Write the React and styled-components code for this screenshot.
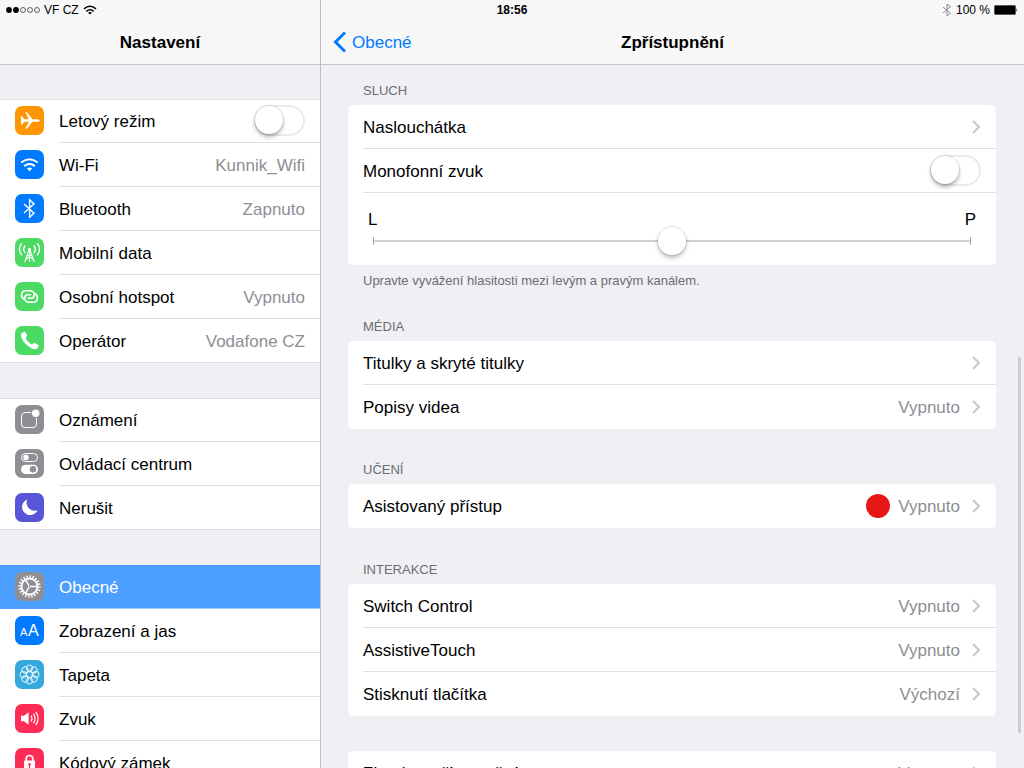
import React from 'react';
import styled, { createGlobalStyle } from 'styled-components';

const GlobalStyle = createGlobalStyle`
    * {
        box-sizing: border-box;
    }

    body {
        margin: 0;
        background: #efeff4;
        color: #000;
        font-family: "Liberation Sans", Arial, sans-serif;
        font-size: 17px;
    }

    button, input {
        font: inherit;
        margin: 0;
    }
`;

const Screen = styled.div`
    position: relative;
    display: grid;
    grid-template-columns: 320px 1fr;
    height: 100vh;
    overflow: hidden;
`;

const StatusBar = styled.div`
    position: absolute;
    top: 0;
    left: 0;
    right: 0;
    z-index: 2;
    display: grid;
    grid-template-columns: 1fr auto 1fr;
    align-items: center;
    height: 20px;
    padding: 0 6px;
    font-size: 12px;
`;

const StatusGroup = styled.div`
    display: flex;
    align-items: center;
    justify-content: ${({ $end }) => ($end ? 'flex-end' : 'flex-start')};
    gap: 4px;
`;

const Panel = styled.section`
    display: flex;
    flex-direction: column;
    min-width: 0;
    min-height: 0;
`;

const DetailPanel = styled(Panel)`
    position: relative;
    border-left: 1px solid #bdbdc2;
`;

const NavBar = styled.header`
    display: grid;
    grid-template-columns: 1fr auto 1fr;
    align-items: center;
    flex: none;
    height: 65px;
    padding: 20px 12px 0;
    background: #f7f7f8;
    border-bottom: 1px solid #c5c5ca;
`;

const Title = styled.h1`
    grid-column: 2;
    margin: 0;
    padding-top: 2px;
    font-size: 17px;
    line-height: 20px;
    font-weight: bold;
`;

const BackButton = styled.button`
    display: flex;
    align-items: center;
    justify-self: start;
    gap: 6px;
    padding: 0;
    border: 0;
    background: none;
    color: #007aff;
`;

const Sidebar = styled.nav`
    display: flex;
    flex-direction: column;
    gap: 35px;
    padding-top: 34px;
    overflow: hidden;
`;

const MenuGroup = styled.div`
    flex: none;
    background: #fff;
    box-shadow: inset 0 1px #dfdfe3;
`;

const MenuItem = styled.a`
    display: flex;
    align-items: center;
    height: 44px;
    padding-left: 15px;
    gap: 15px;
    color: ${({ $selected }) => ($selected ? '#fff' : '#000')};
    background: ${({ $selected }) => ($selected ? '#4c9fff' : 'transparent')};
    text-decoration: none;

    &:last-child {
        border-bottom: 1px solid #dfdfe3;
    }
`;

const MenuBody = styled.span`
    display: flex;
    align-items: center;
    flex: 1;
    height: 44px;
    padding-right: 15px;
    border-bottom: 1px solid ${({ $selected }) => ($selected ? '#a3ceff' : '#dfdfe3')};

    ${MenuItem}:last-child & {
        height: 43px;
        border-bottom: 0;
    }
`;

const Icon = styled.svg`
    flex: none;
    width: 29px;
    height: 29px;
    border-radius: 7px;
    background: ${({ $color }) => $color};
    fill: none;
    stroke: #fff;
    margin-bottom: 1px;
`;

const Label = styled.span`
    flex: 1;
    padding-top: 2px;
`;

const Value = styled.span`
    padding-top: 2px;
    color: #8e8e93;
`;

const Switch = styled.input`
    appearance: none;
    flex: none;
    width: 51px;
    height: 31px;
    border: 2px solid #ebebeb;
    border-radius: 16px;
    background: #fff;

    &::before {
        content: '';
        display: block;
        width: 28px;
        height: 28px;
        margin: -1px;
        border-radius: 50%;
        background: #fff;
        box-shadow: 0 0 1px 1px rgba(0, 0, 0, 0.1), 0 3px 4px rgba(0, 0, 0, 0.28);
    }

    &:checked {
        background: #4cd964;
        border-color: #4cd964;
    }

    &:checked::before {
        margin-left: 20px;
    }
`;

const Content = styled.main`
    flex: 1;
    min-height: 0;
    padding: 0 28px 0 27px;
    overflow: hidden;
`;

const Section = styled.section`
    padding-top: ${({ $gap }) => $gap}px;
`;

const SectionTitle = styled.h2`
    margin: 0;
    padding: 1px 15px 6px;
    color: #6d6d72;
    font-size: 13px;
    line-height: 16px;
    font-weight: normal;
    text-transform: uppercase;
`;

const SectionNote = styled.p`
    margin: 0;
    padding: 8px 15px 0;
    color: #6d6d72;
    font-size: 13px;
    line-height: 16px;
`;

const Card = styled.div`
    border-radius: 5px;
    background: #fff;
`;

const Row = styled.a`
    display: flex;
    height: 44px;
    padding-left: 15px;
    color: #000;
    text-decoration: none;
`;

const RowBody = styled.span`
    display: flex;
    align-items: center;
    flex: 1;
    padding-right: 15px;
    border-bottom: 1px solid #dfdfe3;

    ${Row}:last-child & {
        border-bottom: 0;
    }
`;

const Chevron = styled.svg`
    flex: none;
    width: 9px;
    height: 14px;
    margin-left: 12px;
    fill: none;
    stroke: #c7c7cc;
    stroke-width: 2;
`;

const RedDot = styled.span`
    width: 24px;
    height: 24px;
    margin-right: 8px;
    border-radius: 50%;
    background: #e81717;
`;

const BalanceRow = styled.div`
    padding: 18px 20px 12px;
`;

const BalanceLabels = styled.label`
    display: flex;
    justify-content: space-between;
    line-height: 18px;
`;

const Balance = styled.input`
    appearance: none;
    display: block;
    width: calc(100% - 10px);
    height: 24px;
    margin: 0 5px;
    background:
        linear-gradient(#a9a9a9, #a9a9a9) left center / 1px 8px no-repeat,
        linear-gradient(#a9a9a9, #a9a9a9) right center / 1px 8px no-repeat,
        linear-gradient(#d0d0d0, #d0d0d0) center / 100% 2px no-repeat;

    &::-webkit-slider-thumb {
        appearance: none;
        width: 28px;
        height: 28px;
        border-radius: 50%;
        background: #fff;
        box-shadow: 0 0 1px 1px rgba(0, 0, 0, 0.1), 0 3px 4px rgba(0, 0, 0, 0.25);
    }
`;

const ScrollThumb = styled.div`
    position: absolute;
    right: 3px;
    top: 357px;
    width: 3px;
    height: 376px;
    border-radius: 2px;
    background: #cbcbd0;
`;

const range = (n) => Array.from({ length: n }, (_, i) => i);

const icons = {
    plane: {
        color: '#ff9500',
        art: (
            <path
                fill="#fff"
                stroke="none"
                d="M6 10.2h1.1l2.3 3h4.4L10.4 6.3h1.5l5.5 6.9h5.1c1.5 0 2.3.8 2.3 1.3s-.8 1.3-2.3 1.3h-5.1l-5.5 6.9h-1.5l3.4-6.9H9.4l-2.3 3H6z"
            />
        ),
    },
    wifi: {
        color: '#007aff',
        art: (
            <g strokeWidth="2">
                <path d="M6.2 12.6Q14.5 5.8 22.8 12.6" />
                <path d="M9.2 16.1Q14.5 11.8 19.8 16.1" />
                <path d="M14.5 21.2l-2.6-2.7q2.6-2 5.2 0z" fill="#fff" stroke="none" />
            </g>
        ),
    },
    bluetooth: {
        color: '#007aff',
        art: <path strokeWidth="1.4" d="M9 10l10 9.2-4.4 4V5.8L19 9.8 9 19" />,
    },
    antenna: {
        color: '#4cd964',
        art: (
            <g strokeWidth="1.1">
                <path d="M14.5 11v13M14.3 11L9.8 24M14.7 11L19.2 24M12.6 17l5.2 4M16.4 17l-5.2 4" />
                <circle cx="14.5" cy="11.3" r="1.3" fill="#fff" stroke="none" />
                <path strokeWidth="1.4" d="M10.3 7.5q-3.4 3.8 0 7.6M18.7 7.5q3.4 3.8 0 7.6M6.8 5.3q-4.8 6 0 12M22.2 5.3q4.8 6 0 12" />
            </g>
        ),
    },
    hotspot: {
        color: '#4cd964',
        art: (
            <g strokeWidth="1.6" strokeLinecap="round">
                <path d="M9.4 17.5C7.6 16.7 6.6 15 6.6 13.1c0-2.6 1.7-4.3 4.2-4.3h3.4c3.1 0 5.1 1.6 5.1 4s-1.6 3.5-3.8 3.5h-2.2" />
                <path d="M19.6 11.5c1.8.8 2.8 2.5 2.8 4.4 0 2.6-1.7 4.3-4.2 4.3h-3.4c-3.1 0-5.1-1.6-5.1-4s1.6-3.5 3.8-3.5h2.2" />
            </g>
        ),
    },
    phone: {
        color: '#4cd964',
        art: (
            <path
                fill="#fff"
                stroke="none"
                d="M9.6 5.8C10.6 5.6 11.3 7.6 11.9 9.3C12.2 10.4 11.6 10.9 10.8 11.6C10.2 12.2 11.2 13.8 13.2 15.8C15.2 17.8 16.7 18.8 17.4 18.2C18.1 17.4 18.6 16.9 19.7 17.2C21.5 17.8 23.9 18.8 23.8 19.8C23.4 21.7 21.8 23.3 19.8 23.2C17 23 13 20.3 10.8 18C8.3 15.4 6 12 5.9 9.2C5.8 7.4 7.6 6.1 9.6 5.8Z"
            />
        ),
    },
    notifications: {
        color: '#8e8e93',
        art: (
            <g>
                <rect x="6.5" y="7.5" width="15" height="15" rx="3.5" />
                <circle cx="20.7" cy="8.3" r="4.3" fill="#fff" stroke="#8e8e93" />
            </g>
        ),
    },
    controls: {
        color: '#8e8e93',
        art: (
            <g>
                <rect x="6.5" y="4.5" width="16" height="8" rx="4" />
                <circle cx="11" cy="8.5" r="2.7" fill="#fff" stroke="none" />
                <rect x="6" y="15.7" width="17" height="9.3" rx="4.6" fill="#fff" stroke="none" />
                <circle cx="18" cy="20.3" r="3.2" fill="#8e8e93" stroke="none" />
            </g>
        ),
    },
    moon: {
        color: '#5856d6',
        art: <path fill="#fff" stroke="none" d="M12.2 6.4A8.1 8.1 0 1 0 22.6 17.2A8.2 8.2 0 0 1 12.2 6.4Z" />,
    },
    gear: {
        color: '#8e8e93',
        art: (
            <g>
                <circle cx="14.5" cy="14.5" r="10" strokeWidth="2.4" pathLength="40" strokeDasharray="0.9 1.1" />
                <circle cx="14.5" cy="14.5" r="8" strokeWidth="2" />
                <path strokeWidth="1.4" d="M15 14.5h7M14.2 14.1l-3.6-6.2M14.2 14.9l-3.6 6.2" />
            </g>
        ),
    },
    display: {
        color: '#007aff',
        art: (
            <g fill="#fff" stroke="none">
                <text x="5" y="20" fontSize="11">A</text>
                <text x="13" y="20" fontSize="16">A</text>
            </g>
        ),
    },
    wallpaper: {
        color: '#34aadc',
        art: (
            <g strokeWidth=".9">
                {range(8).map((i) => (
                    <circle key={i} cx="14.5" cy="8.2" r="3.2" transform={`rotate(${i * 45} 14.5 14.5)`} />
                ))}
                <circle cx="14.5" cy="14.5" r="2.9" />
            </g>
        ),
    },
    sound: {
        color: '#ff2d55',
        art: (
            <g strokeWidth="1.2" strokeLinecap="round">
                <path d="M6 11.8h3l4.6-3.6v12.6L9 17.2H6z" fill="#fff" stroke="none" />
                <path d="M16.3 12q1.6 2.5 0 5M18.7 10.2q2.8 4.3 0 8.6M21.1 8.4q4 6.1 0 12.2" />
            </g>
        ),
    },
    lock: {
        color: '#ff2d55',
        art: (
            <g>
                <path d="M11.2 14v-3.2a3.3 3.3 0 0 1 6.6 0V14" strokeWidth="1.7" />
                <rect x="9" y="12.5" width="11" height="10" rx="1" fill="#fff" stroke="none" />
                <path d="M14.5 16v4" stroke="#ff2d55" strokeWidth="1.2" />
                <circle cx="14.5" cy="16.3" r="1.3" fill="#ff2d55" stroke="none" />
            </g>
        ),
    },
};

const menu = [
    [
        { icon: 'plane', label: 'Letový režim', toggle: true },
        { icon: 'wifi', label: 'Wi-Fi', value: 'Kunnik_Wifi' },
        { icon: 'bluetooth', label: 'Bluetooth', value: 'Zapnuto' },
        { icon: 'antenna', label: 'Mobilní data' },
        { icon: 'hotspot', label: 'Osobní hotspot', value: 'Vypnuto' },
        { icon: 'phone', label: 'Operátor', value: 'Vodafone CZ' },
    ],
    [
        { icon: 'notifications', label: 'Oznámení' },
        { icon: 'controls', label: 'Ovládací centrum' },
        { icon: 'moon', label: 'Nerušit' },
    ],
    [
        { icon: 'gear', label: 'Obecné', selected: true },
        { icon: 'display', label: 'Zobrazení a jas' },
        { icon: 'wallpaper', label: 'Tapeta' },
        { icon: 'sound', label: 'Zvuk' },
        { icon: 'lock', label: 'Kódový zámek' },
    ],
];

const SidebarItem = ({ icon, label, value, toggle, selected }) => {
    const link = toggle ? { as: 'label' } : { href: '#' };
    return (
        <MenuItem {...link} $selected={selected} aria-current={selected ? 'page' : undefined}>
            <Icon viewBox="0 0 29 29" $color={icons[icon].color} aria-hidden="true">
                {icons[icon].art}
            </Icon>
            <MenuBody $selected={selected}>
                <Label>{label}</Label>
                {value && <Value>{value}</Value>}
                {toggle && <Switch type="checkbox" role="switch" />}
            </MenuBody>
        </MenuItem>
    );
};

const SettingRow = ({ label, value, toggle, dot }) => {
    const link = toggle ? { as: 'label' } : { href: '#' };
    return (
        <Row {...link}>
            <RowBody>
                <Label>{label}</Label>
                {dot && <RedDot />}
                {value && <Value>{value}</Value>}
                {toggle ? (
                    <Switch type="checkbox" role="switch" />
                ) : (
                    <Chevron viewBox="0 0 9 14" aria-hidden="true">
                        <path d="M1 1l6 6-6 6" />
                    </Chevron>
                )}
            </RowBody>
        </Row>
    );
};

const Status = () => (
    <StatusBar>
        <StatusGroup>
            <svg width="34" height="6" viewBox="0 0 34 6" aria-hidden="true">
                {range(5).map((i) => (
                    <circle
                        key={i}
                        cx={3 + i * 7}
                        cy="3"
                        r={i < 2 ? 2.9 : 2.5}
                        fill={i < 2 ? '#000' : 'none'}
                        stroke={i < 2 ? 'none' : '#000'}
                        strokeWidth=".6"
                    />
                ))}
            </svg>
            <span>VF CZ</span>
            <svg width="14" height="10" viewBox="0 0 14 10" fill="none" stroke="#000" strokeWidth="1.5" aria-hidden="true">
                <path d="M1 3.8q6-5 12 0M3.3 6.3q3.7-3 7.4 0" />
                <path d="M7 9.6L5 7.7q2-1.5 4 0z" fill="#000" stroke="none" />
            </svg>
        </StatusGroup>
        <b>18:56</b>
        <StatusGroup $end>
            <svg width="10" height="14" viewBox="0 0 10 14" fill="none" stroke="#8e8e93" aria-hidden="true">
                <path d="M1 4l7.5 6.3L5 13V1l3.5 2.7L1 10" />
            </svg>
            <span>100 %</span>
            <svg width="24" height="10" viewBox="0 0 24 10" aria-hidden="true">
                <rect x=".5" y=".5" width="21" height="9" rx="1" stroke="#555" />
                <path d="M22.5 3q1.5 2 0 4z" />
            </svg>
        </StatusGroup>
    </StatusBar>
);

const App = () => (
    <>
        <GlobalStyle />
        <Screen>
            <Status />
            <Panel>
                <NavBar>
                    <Title>Nastavení</Title>
                </NavBar>
                <Sidebar>
                    {menu.map((group, i) => (
                        <MenuGroup key={i}>
                            {group.map((item) => (
                                <SidebarItem key={item.label} {...item} />
                            ))}
                        </MenuGroup>
                    ))}
                </Sidebar>
            </Panel>
            <DetailPanel>
                <NavBar>
                    <BackButton type="button">
                        <svg width="13" height="22" viewBox="0 0 13 22" fill="none" stroke="currentColor" strokeWidth="3" aria-hidden="true">
                            <path d="M12 1.5L2.5 11l9.5 9.5" />
                        </svg>
                        <Label>Obecné</Label>
                    </BackButton>
                    <Title>Zpřístupnění</Title>
                </NavBar>
                <Content>
                    <Section $gap={17}>
                        <SectionTitle>Sluch</SectionTitle>
                        <Card>
                            <SettingRow label="Naslouchátka" />
                            <SettingRow label="Monofonní zvuk" toggle />
                            <BalanceRow>
                                <BalanceLabels htmlFor="balance">
                                    <span>L</span>
                                    <span>P</span>
                                </BalanceLabels>
                                <Balance id="balance" type="range" min="-50" max="50" defaultValue="0" />
                            </BalanceRow>
                        </Card>
                        <SectionNote>Upravte vyvážení hlasitosti mezi levým a pravým kanálem.</SectionNote>
                    </Section>
                    <Section $gap={29}>
                        <SectionTitle>Média</SectionTitle>
                        <Card>
                            <SettingRow label="Titulky a skryté titulky" />
                            <SettingRow label="Popisy videa" value="Vypnuto" />
                        </Card>
                    </Section>
                    <Section $gap={32}>
                        <SectionTitle>Učení</SectionTitle>
                        <Card>
                            <SettingRow label="Asistovaný přístup" value="Vypnuto" dot />
                        </Card>
                    </Section>
                    <Section $gap={33}>
                        <SectionTitle>Interakce</SectionTitle>
                        <Card>
                            <SettingRow label="Switch Control" value="Vypnuto" />
                            <SettingRow label="AssistiveTouch" value="Vypnuto" />
                            <SettingRow label="Stisknutí tlačítka" value="Výchozí" />
                        </Card>
                    </Section>
                    <Section $gap={35}>
                        <Card>
                            <SettingRow label="Zkratka zpřístupnění" value="Vypnuto" />
                        </Card>
                    </Section>
                </Content>
                <ScrollThumb />
            </DetailPanel>
        </Screen>
    </>
);

export default App;
